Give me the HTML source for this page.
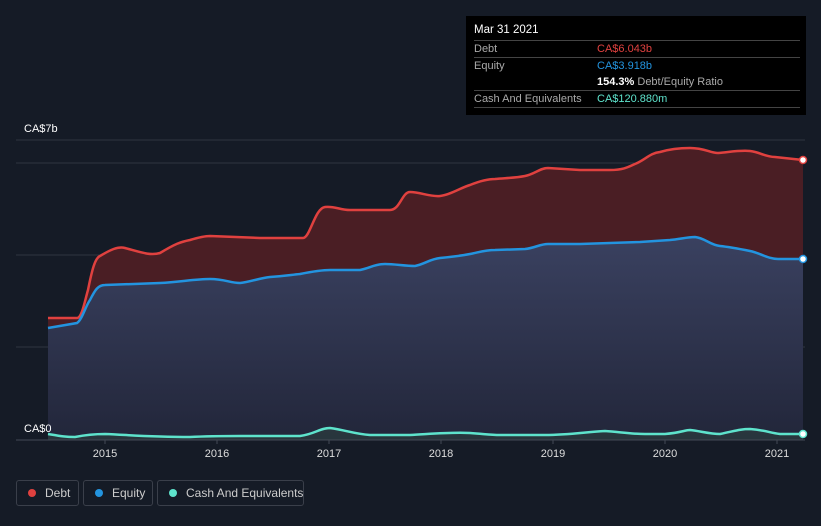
<!DOCTYPE html><html><head><style>
html,body{margin:0;width:821px;height:526px;overflow:hidden}
body{background:#151b26;font-family:"Liberation Sans",sans-serif;position:relative}
.tip{position:absolute;left:466px;top:16px;width:340px;height:99px;background:#000;color:#fff;font-size:11px}
.tip .r{position:absolute;left:8px;width:326px;border-top:1px solid #444;height:17px;line-height:17px}
.g{color:#aaa}
.leg{position:absolute;top:480px;height:26px;border:1px solid #3a3f4a;border-radius:3px;color:#ccc;font-size:12px;line-height:24px;box-sizing:border-box;white-space:nowrap;overflow:hidden}
.leg i{display:inline-block;width:8px;height:8px;border-radius:50%;margin:0 9px 0 11px;vertical-align:0px}
</style></head><body>
<svg width="821" height="526" style="position:absolute;left:0;top:0">
<defs><linearGradient id="eg" x1="0" y1="0" x2="0" y2="1"><stop offset="0" stop-color="#3a4160"/><stop offset="1" stop-color="#22263a"/></linearGradient></defs>
<line x1="16" y1="140" x2="805" y2="140" stroke="#2e3440"/>
<line x1="16" y1="163" x2="805" y2="163" stroke="#2e3440"/>
<line x1="16" y1="255" x2="805" y2="255" stroke="#2e3440"/>
<line x1="16" y1="347" x2="805" y2="347" stroke="#2e3440"/>
<path fill="#4a1e24" d="M48,318 L77,318 C82,318 85,300 88,290 C92,270 95,258 100,256 C110,250 118,246 125,248 C140,252 150,256 160,253 C175,244 180,242 190,240 C200,237 205,236 210,236 L260,238 L303,238 C310,238 315,208 325,207 C335,206 340,210 350,210 L390,210 C400,210 402,192 410,192 C420,192 430,197 440,196 C450,195 460,188 470,185 C480,181 488,179 495,179 C505,178 515,178 525,176 C535,174 540,168 548,168 L580,170 L610,170 C625,170 630,166 635,164 C645,160 650,153 660,152 C670,149 680,148 690,148 C705,148 710,153 718,153 C730,152 740,150 750,151 C760,152 765,157 775,157 L803,160 L803,440 L48,440Z"/>
<path fill="url(#eg)" d="M48,328 L77,323 C82,320 86,305 90,300 C95,290 98,285 105,285 L160,283 C180,282 195,279 210,279 C225,279 230,283 240,283 C250,282 260,278 270,277 C285,276 290,275 300,274 C310,272 320,270 330,270 L360,270 C370,268 375,264 385,264 C395,264 405,266 415,266 C425,264 430,259 440,258 C450,257 460,256 470,254 C480,252 485,250 495,250 L525,249 C535,248 540,244 548,244 L580,244 L640,242 L670,240 C680,239 688,237 695,237 C705,238 710,245 720,246 C730,247 740,249 750,251 C760,253 768,259 778,259 L803,259 L803,440 L48,440Z"/>
<path fill="#2b3b3f" opacity=".8" d="M48,434 C60,436 65,437 75,437 C85,435 95,434 105,434 C130,435 150,437 190,437 C210,436 220,436 240,436 C260,436 280,436 300,436 C315,434 320,428 330,428 C345,430 355,434 370,435 L410,435 C430,434 450,432 470,433 C485,434 490,435 500,435 L545,435 C570,435 585,432 605,431 C620,432 630,434 645,434 L665,434 C680,433 685,430 690,430 C700,431 710,434 720,434 C735,431 740,429 750,429 C765,430 770,433 780,434 L803,434 L803,440 L48,440Z"/>
<path fill="none" stroke="#e0413f" stroke-width="2.5" d="M48,318 L77,318 C82,318 85,300 88,290 C92,270 95,258 100,256 C110,250 118,246 125,248 C140,252 150,256 160,253 C175,244 180,242 190,240 C200,237 205,236 210,236 L260,238 L303,238 C310,238 315,208 325,207 C335,206 340,210 350,210 L390,210 C400,210 402,192 410,192 C420,192 430,197 440,196 C450,195 460,188 470,185 C480,181 488,179 495,179 C505,178 515,178 525,176 C535,174 540,168 548,168 L580,170 L610,170 C625,170 630,166 635,164 C645,160 650,153 660,152 C670,149 680,148 690,148 C705,148 710,153 718,153 C730,152 740,150 750,151 C760,152 765,157 775,157 L803,160"/>
<path fill="none" stroke="#2394df" stroke-width="2.5" d="M48,328 L77,323 C82,320 86,305 90,300 C95,290 98,285 105,285 L160,283 C180,282 195,279 210,279 C225,279 230,283 240,283 C250,282 260,278 270,277 C285,276 290,275 300,274 C310,272 320,270 330,270 L360,270 C370,268 375,264 385,264 C395,264 405,266 415,266 C425,264 430,259 440,258 C450,257 460,256 470,254 C480,252 485,250 495,250 L525,249 C535,248 540,244 548,244 L580,244 L640,242 L670,240 C680,239 688,237 695,237 C705,238 710,245 720,246 C730,247 740,249 750,251 C760,253 768,259 778,259 L803,259"/>
<path fill="none" stroke="#5ee3cc" stroke-width="2.5" d="M48,434 C60,436 65,437 75,437 C85,435 95,434 105,434 C130,435 150,437 190,437 C210,436 220,436 240,436 C260,436 280,436 300,436 C315,434 320,428 330,428 C345,430 355,434 370,435 L410,435 C430,434 450,432 470,433 C485,434 490,435 500,435 L545,435 C570,435 585,432 605,431 C620,432 630,434 645,434 L665,434 C680,433 685,430 690,430 C700,431 710,434 720,434 C735,431 740,429 750,429 C765,430 770,433 780,434 L803,434"/>
<line x1="16" y1="440" x2="805" y2="440" stroke="#444a55"/>
<g stroke="#444a55"><line x1="105" y1="440" x2="105" y2="444"/><line x1="217" y1="440" x2="217" y2="444"/><line x1="329" y1="440" x2="329" y2="444"/><line x1="441" y1="440" x2="441" y2="444"/><line x1="553" y1="440" x2="553" y2="444"/><line x1="665" y1="440" x2="665" y2="444"/><line x1="777" y1="440" x2="777" y2="444"/></g>
<circle cx="803" cy="160" r="3.5" fill="#fff" stroke="#e0413f" stroke-width="1.5"/>
<circle cx="803" cy="259" r="3.5" fill="#fff" stroke="#2394df" stroke-width="1.5"/>
<circle cx="803" cy="434" r="3.5" fill="#fff" stroke="#5ee3cc" stroke-width="1.5"/>
<g fill="#fff" font-size="11" font-family="Liberation Sans,sans-serif">
<text x="24" y="132">CA$7b</text><text x="24" y="432">CA$0</text>
<g text-anchor="middle" fill="#ddd"><text x="105" y="457">2015</text><text x="217" y="457">2016</text><text x="329" y="457">2017</text><text x="441" y="457">2018</text><text x="553" y="457">2019</text><text x="665" y="457">2020</text><text x="777" y="457">2021</text></g>
</g>
</svg>
<div class="tip">
<div style="position:absolute;left:8px;top:8px;font-size:11.5px">Mar 31 2021</div>
<div class="r" style="top:24px"><span class="g">Debt</span><span style="position:absolute;left:123px;color:#e0413f">CA$6.043b</span></div>
<div class="r" style="top:41px"><span class="g">Equity</span><span style="position:absolute;left:123px;color:#2394df">CA$3.918b</span></div>
<div class="r" style="top:58px;border:0"><span style="position:absolute;left:123px"><b>154.3%</b> <span class="g">Debt/Equity Ratio</span></span></div>
<div class="r" style="top:74px"><span class="g">Cash And Equivalents</span><span style="position:absolute;left:123px;color:#5ee3cc">CA$120.880m</span></div>
<div class="r" style="top:91px;height:0"></div>
</div>
<div class="leg" style="left:16px;width:63px"><i style="background:#e0413f"></i>Debt</div>
<div class="leg" style="left:83px;width:70px"><i style="background:#2394df"></i>Equity</div>
<div class="leg" style="left:157px;width:147px"><i style="background:#5ee3cc"></i>Cash And Equivalents</div>
</body></html>
